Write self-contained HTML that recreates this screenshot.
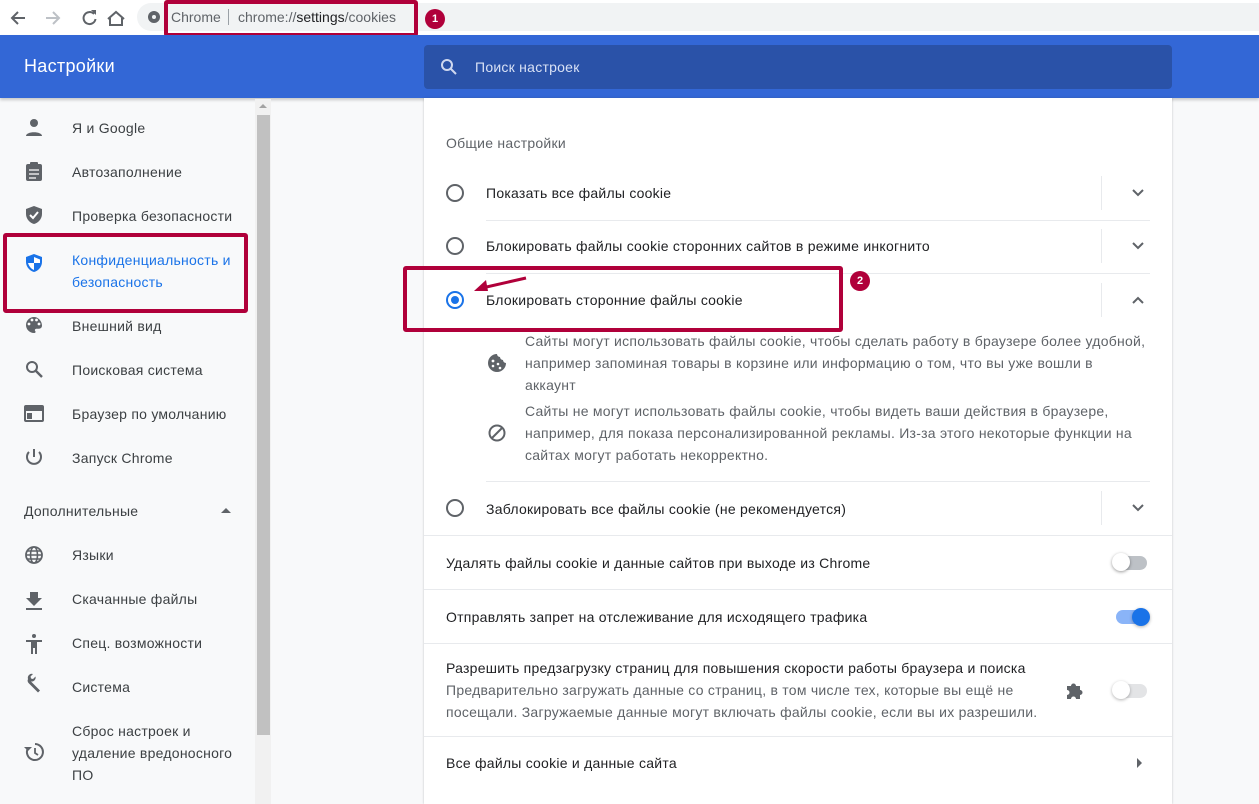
<!DOCTYPE html>
<html><head><meta charset="utf-8">
<style>
*{margin:0;padding:0;box-sizing:border-box}
body{width:1259px;height:804px;overflow:hidden;background:#f8f9fa;font-family:"Liberation Sans","Noto Sans CJK SC",sans-serif;font-size:14px;letter-spacing:.25px;color:#202124;position:relative}
.a{position:absolute}
.t{position:absolute;white-space:nowrap}
.side{color:#3c4043}
.sep{position:absolute;height:1px;background:#e8eaed}
.vd{position:absolute;width:1px;background:#e8eaed;height:34px}
.radio{position:absolute;width:18px;height:18px;border:2px solid #5f6368;border-radius:50%}
.red{position:absolute;border:4px solid #b0003a;border-radius:3px}
.badge{position:absolute;width:20px;height:20px;border-radius:50%;background:#b0003a;color:#fff;font-size:11px;font-weight:bold;text-align:center;line-height:20px;letter-spacing:0}
.sec{color:#5f6368}
</style></head><body>
<div class="a" style="left:0;top:0;width:1259px;height:35px;background:#fff"></div>
<svg class="a" style="left:8px;top:7px" width="120" height="22" viewBox="0 0 120 22">
<path d="M17 11H4M10 5l-6 6 6 6" stroke="#5f6368" stroke-width="2" fill="none"/>
<path d="M38 11h13M45 5l6 6-6 6" stroke="#bdc1c6" stroke-width="2" fill="none"/>
<path d="M86 7a6 6 0 1 0 1.5 5" stroke="#5f6368" stroke-width="2" fill="none"/><path d="M83 3h5v5z" fill="#5f6368"/>
<path d="M100 12l8-7 8 7M102 11v7h12v-7" stroke="#5f6368" stroke-width="2" fill="none"/>
</svg>
<div class="a" style="left:137px;top:3px;width:1122px;height:28px;background:#f1f3f4;border-radius:14px 0 0 14px"></div>
<div class="a" style="left:148px;top:11px;width:12px;height:12px;border-radius:50%;background:#5f6368"></div>
<div class="a" style="left:152px;top:15px;width:4px;height:4px;border-radius:50%;background:#f1f3f4"></div>
<div class="t" style="left:171px;top:9px;font-size:14px;letter-spacing:0;color:#5f6368">Chrome</div>
<div class="a" style="left:228px;top:9px;width:1px;height:16px;background:#9aa0a6"></div>
<div class="t" style="left:238px;top:9px;font-size:14px;letter-spacing:0;color:#5f6368">chrome://<span style="color:#202124">settings</span>/cookies</div>
<div class="red" style="left:164px;top:0;width:254px;height:37px"></div>
<div class="badge" style="left:425px;top:9px">1</div>
<div class="a" style="left:0;top:35px;width:1259px;height:63px;background:#3367d6;box-shadow:0 2px 3px rgba(0,0,0,.2)"></div>
<div class="t" style="left:24px;top:56px;font-size:18px;letter-spacing:.3px;color:#fff">Настройки</div>
<div class="a" style="left:424px;top:45px;width:748px;height:44px;background:#2a52a8;border-radius:4px"></div>
<svg class="a" style="left:440px;top:58px" width="18" height="18"><circle cx="7" cy="7" r="5" stroke="#cfd8ef" stroke-width="2" fill="none"/><path d="M11 11l5 5" stroke="#cfd8ef" stroke-width="2"/></svg>
<div class="t" style="left:475px;top:59px;font-size:14px;color:#d8e1f5">Поиск настроек</div>
<div class="a" style="left:255px;top:99px;width:16px;height:705px;background:#f1f1f1"></div>
<div class="a" style="left:257px;top:115px;width:13px;height:620px;background:#c1c1c1"></div>
<div class="a" style="left:259px;top:104px;border-left:4px solid transparent;border-right:4px solid transparent;border-bottom:4px solid #a3a3a3"></div>
<svg class="a" style="left:24px;top:118px" width="20" height="670" viewBox="0 0 20 670" fill="#5f6368">
<circle cx="10" cy="5" r="4"/><path d="M2 18c0-5 16-5 16 0z"/>
<rect x="2" y="46" width="16" height="17" rx="2"/><rect x="6" y="44" width="8" height="4" rx="1"/><path d="M5 52h10M5 56h10M5 60h7" stroke="#fff" stroke-width="1.3"/>
<path d="M10 88l8 3v5c0 5-4 9-8 10-4-1-8-5-8-10v-5z"/><path d="M6 97l3 3 5-6" stroke="#fff" stroke-width="2" fill="none"/>
<path d="M10 136l8 3v5c0 5-4 9-8 10-4-1-8-5-8-10v-5z" fill="#1a73e8"/><path d="M10 138v7h6v-3.5l-6-2.5zM10 145v7c-3-1-5-4-6-7z" fill="#fff"/>
<path d="M10 199a8 8 0 1 0 0 16c1.5 0 2-1 1.2-2-.8-1 0-2.2 1.3-2.2H15a3 3 0 0 0 3-3c0-5-4-8.8-8-8.8z"/><circle cx="5" cy="206" r="1.4" fill="#fff"/><circle cx="8" cy="202" r="1.4" fill="#fff"/><circle cx="12.5" cy="202" r="1.4" fill="#fff"/><circle cx="15" cy="206" r="1.4" fill="#fff"/>
<circle cx="8" cy="249" r="5" stroke="#5f6368" stroke-width="2" fill="none"/><path d="M12 253l6 6" stroke="#5f6368" stroke-width="2.4"/>
<rect x="1" y="288" width="18" height="15" rx="1" stroke="#5f6368" stroke-width="2" fill="none"/><rect x="1" y="288" width="18" height="5"/><rect x="3" y="295" width="5" height="6"/>
<path d="M10 331v8M5 334a7 7 0 1 0 10 0" stroke="#5f6368" stroke-width="2" fill="none"/>
<circle cx="10" cy="437" r="8" stroke="#5f6368" stroke-width="1.8" fill="none"/><ellipse cx="10" cy="437" rx="3.5" ry="8" stroke="#5f6368" stroke-width="1.6" fill="none"/><path d="M2 437h16M3 433h14M3 441h14" stroke="#5f6368" stroke-width="1.4"/>
<path d="M6 474h8v6h4l-8 8-8-8h4z"/><rect x="2" y="490" width="16" height="2"/>
<circle cx="10" cy="518" r="2"/><path d="M2 522h16v2h-5v12h-2v-6h-2v6H7v-12H2z"/>
<path d="M4 561a4 4 0 0 1 5-5l-2.5 2.5.5 2 2 .5L11.5 558.5a4 4 0 0 1-4.5 5L16 572.5 14 574.5 5 565.5a4 4 0 0 1-1-4.5z"/>
<path d="M11 626a8 8 0 1 1-7 4" stroke="#5f6368" stroke-width="2" fill="none"/><path d="M0 629l4 4 4-4z"/><path d="M11 630v5l3 2" stroke="#5f6368" stroke-width="1.8" fill="none"/>
</svg>
<div class="t side" style="left:72px;top:120px">Я и Google</div>
<div class="t side" style="left:72px;top:164px">Автозаполнение</div>
<div class="t side" style="left:72px;top:208px">Проверка безопасности</div>
<div class="t" style="left:72px;top:249px;color:#1a73e8;line-height:22px">Конфиденциальность и<br>безопасность</div>
<div class="red" style="left:3px;top:233px;width:245px;height:80px"></div>
<div class="t side" style="left:72px;top:318px">Внешний вид</div>
<div class="t side" style="left:72px;top:362px">Поисковая система</div>
<div class="t side" style="left:72px;top:406px">Браузер по умолчанию</div>
<div class="t side" style="left:72px;top:450px">Запуск Chrome</div>
<div class="t side" style="left:24px;top:503px">Дополнительные</div>
<div class="a" style="left:221px;top:508px;border-left:5px solid transparent;border-right:5px solid transparent;border-bottom:5px solid #5f6368"></div>
<div class="t side" style="left:72px;top:547px">Языки</div>
<div class="t side" style="left:72px;top:591px">Скачанные файлы</div>
<div class="t side" style="left:72px;top:635px">Спец. возможности</div>
<div class="t side" style="left:72px;top:679px">Система</div>
<div class="t side" style="left:72px;top:720px;line-height:22px">Сброс настроек и<br>удаление вредоносного<br>ПО</div>
<div class="a" style="left:424px;top:98px;width:748px;height:706px;background:#fff;box-shadow:0 0 2px rgba(60,64,67,.3)"></div>
<div class="t sec" style="left:446px;top:135px">Общие настройки</div>
<div class="radio" style="left:446px;top:184px"></div>
<div class="t" style="left:486px;top:185px">Показать все файлы cookie</div>
<div class="sep" style="left:486px;top:220px;width:664px"></div>
<div class="radio" style="left:446px;top:237px"></div>
<div class="t" style="left:486px;top:238px">Блокировать файлы cookie сторонних сайтов в режиме инкогнито</div>
<div class="sep" style="left:486px;top:273px;width:664px"></div>
<div class="radio" style="left:446px;top:291px;border-color:#1a73e8"></div>
<div class="a" style="left:451px;top:296px;width:8px;height:8px;border-radius:50%;background:#1a73e8"></div>
<div class="t" style="left:486px;top:292px">Блокировать сторонние файлы cookie</div>
<div class="vd" style="left:1101px;top:176px"></div>
<div class="vd" style="left:1101px;top:229px"></div>
<div class="vd" style="left:1101px;top:283px"></div>
<svg class="a" style="left:1130px;top:185px" width="16" height="130"><path d="M3 5l5 5 5-5M3 58l5 5 5-5M3 118l5-5 5 5" stroke="#5f6368" stroke-width="2" fill="none"/></svg>
<svg class="a" style="left:1130px;top:500px" width="16" height="16"><path d="M3 5l5 5 5-5" stroke="#5f6368" stroke-width="2" fill="none"/></svg>
<div class="red" style="left:403px;top:266px;width:440px;height:66px"></div>
<svg class="a" style="left:470px;top:274px" width="60" height="24"><path d="M56 4L12 14" stroke="#b0003a" stroke-width="3"/><path d="M4 17l12-11 2 11z" fill="#b0003a"/></svg>
<div class="badge" style="left:850px;top:271px">2</div>
<svg class="a" style="left:487px;top:353px" width="20" height="90" viewBox="0 0 20 90"><path d="M10 1a9 9 0 1 0 9 9 3 3 0 0 1-3-3 3 3 0 0 1-3-3 3 3 0 0 1-3-3z" fill="#5f6368"/><circle cx="6" cy="8" r="1.4" fill="#fff"/><circle cx="6" cy="13" r="1.3" fill="#fff"/><circle cx="11" cy="11" r="1.3" fill="#fff"/><circle cx="13" cy="15" r="1.3" fill="#fff"/><circle cx="10" cy="80" r="7.5" stroke="#5f6368" stroke-width="2" fill="none"/><path d="M5 85l10-10" stroke="#5f6368" stroke-width="2"/></svg>
<div class="t sec" style="left:525px;top:330px;line-height:22px">Сайты могут использовать файлы cookie, чтобы сделать работу в браузере более удобной,<br>например запоминая товары в корзине или информацию о том, что вы уже вошли в<br>аккаунт</div>
<div class="t sec" style="left:525px;top:400px;line-height:22px">Сайты не могут использовать файлы cookie, чтобы видеть ваши действия в браузере,<br>например, для показа персонализированной рекламы. Из-за этого некоторые функции на<br>сайтах могут работать некорректно.</div>
<div class="sep" style="left:486px;top:481px;width:664px"></div>
<div class="radio" style="left:446px;top:499px"></div>
<div class="vd" style="left:1101px;top:491px"></div>
<div class="t" style="left:486px;top:501px">Заблокировать все файлы cookie (не рекомендуется)</div>
<div class="sep" style="left:424px;top:535px;width:748px"></div>
<div class="t" style="left:446px;top:555px">Удалять файлы cookie и данные сайтов при выходе из Chrome</div>
<div class="a" style="left:1114px;top:556px;width:33px;height:14px;border-radius:7px;background:#bdc1c6"></div>
<div class="a" style="left:1112px;top:553px;width:18px;height:18px;border-radius:50%;background:#fff;box-shadow:0 1px 3px rgba(0,0,0,.4)"></div>
<div class="sep" style="left:424px;top:589px;width:748px"></div>
<div class="t" style="left:446px;top:609px">Отправлять запрет на отслеживание для исходящего трафика</div>
<div class="a" style="left:1116px;top:610px;width:33px;height:14px;border-radius:7px;background:#8ab4f8"></div>
<div class="a" style="left:1132px;top:608px;width:18px;height:18px;border-radius:50%;background:#1a73e8;box-shadow:0 1px 3px rgba(0,0,0,.3)"></div>
<div class="sep" style="left:424px;top:643px;width:748px"></div>
<div class="t" style="left:446px;top:657px;line-height:22px">Разрешить предзагрузку страниц для повышения скорости работы браузера и поиска<br><span class="sec">Предварительно загружать данные со страниц, в том числе тех, которые вы ещё не<br>посещали. Загружаемые данные могут включать файлы cookie, если вы их разрешили.</span></div>
<svg class="a" style="left:1065px;top:680px" width="20" height="20"><path d="M2 6h4a2.5 2.5 0 0 1 5 0h4v4a2.5 2.5 0 0 1 0 5v4h-4a2.5 2.5 0 0 0-5 0H2v-4a2.5 2.5 0 0 0 0-5z" fill="#5f6368"/></svg>
<div class="a" style="left:1114px;top:684px;width:33px;height:14px;border-radius:7px;background:#e3e4e6"></div>
<div class="a" style="left:1112px;top:681px;width:18px;height:18px;border-radius:50%;background:#fff;box-shadow:0 1px 3px rgba(0,0,0,.3)"></div>
<div class="sep" style="left:424px;top:736px;width:748px"></div>
<div class="t" style="left:446px;top:755px">Все файлы cookie и данные сайта</div>
<div class="a" style="left:1137px;top:758px;border-top:5px solid transparent;border-bottom:5px solid transparent;border-left:5px solid #5f6368"></div>
</body></html>
